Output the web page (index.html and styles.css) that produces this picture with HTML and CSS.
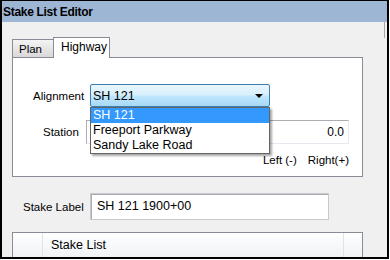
FILE: index.html
```html
<!DOCTYPE html>
<html>
<head>
<meta charset="utf-8">
<link rel="stylesheet" href="styles.css">
</head>
<body>
<div class="window">
  <div class="titlebar">Stake List Editor</div>
  <div class="content">
    <div class="tabs">
      <div class="tab">Plan</div>
      <div class="tab active">Highway</div>
    </div>
    <div class="panel">
      <div class="row row-align">
        <span class="label lbl-align">Alignment</span>
        <div class="combo">
          <span class="combo-text">SH 121</span>
          <span class="arrow"></span>
          <ul class="dropdown">
            <li class="selected">SH 121</li>
            <li>Freeport Parkway</li>
            <li>Sandy Lake Road</li>
          </ul>
        </div>
      </div>
      <div class="row row-station">
        <span class="label lbl-station">Station</span>
        <div class="field station-field">0.0</div>
      </div>
      <div class="row row-offset">
        <span>Left (-)</span>
        <span>Right(+)</span>
      </div>
    </div>
    <div class="row row-label">
      <span class="label lbl-stake">Stake Label</span>
      <div class="field label-field">SH 121 1900+00</div>
    </div>
    <div class="grid">
      <div class="gcell g1"></div>
      <div class="gcell g2">Stake List</div>
      <div class="gcell g3"></div>
    </div>
  </div>
</div>
</body>
</html>
```

FILE: styles.css
```css
* { box-sizing: border-box; }
html, body { margin: 0; padding: 0; background: #ffffff; }
body {
  font-family: "Liberation Sans", Arial, sans-serif;
  font-size: 11.5px;
  color: #000;
}
.window {
  width: 389px;
  height: 259px;
  border-top: 1px solid #000;
  border-left: 2px solid #000;
  border-right: 2px solid #000;
  border-bottom: 2px solid #000;
  background: #f0f0f0;
  overflow: hidden;
  display: flex;
  flex-direction: column;
}
.titlebar {
  height: 21px;
  line-height: 23px;
  background: #9db6d4;
  font-weight: bold;
  font-size: 12px;
  letter-spacing: -0.3px;
  padding-left: 1px;
  flex: none;
}
.content {
  position: relative;
  flex: 1;
  padding: 15px 0 0 10px;
}
.content::after {
  content: "";
  position: absolute;
  right: 2px;
  top: 0;
  width: 1px;
  height: 16px;
  background: #a7a7a7;
}
.tabs {
  display: flex;
  align-items: flex-end;
  height: 20px;
}
.tab {
  width: 42px;
  height: 18px;
  border: 1px solid #898c95;
  border-bottom: none;
  background: linear-gradient(#f4f4f4, #e6e6e6 50%, #d8d8d8);
  padding-left: 6px;
  line-height: 19px;
}
.tab.active {
  position: relative;
  z-index: 2;
  width: 57px;
  height: 21px;
  margin-left: -1px;
  margin-bottom: -1px;
  background: #fff;
  padding-left: 7px;
  line-height: 18px;
  font-size: 12px;
}
.panel {
  width: 351px;
  height: 120px;
  border: 1px solid #898c95;
  background: #fff;
  padding: 26px 13px 9px 0;
  display: flex;
  flex-direction: column;
}
.row {
  display: flex;
  align-items: center;
}
.label { flex: none; }
.lbl-align { margin-left: 20px; width: 57px; }
.lbl-station { margin-left: 30px; width: 45px; }
.combo {
  position: relative;
  width: 180px;
  height: 23px;
  border: 1px solid #3c7fb1;
  border-radius: 2px;
  background: linear-gradient(#eaf6fd, #d9f0fc 45%, #bee6fd 55%, #a7d9f5);
  display: flex;
  align-items: center;
  padding-left: 2px;
  font-size: 12.5px;
}
.combo-text { flex: 1; padding-top: 1px; }
.arrow {
  width: 0;
  height: 0;
  border-left: 4px solid transparent;
  border-right: 4px solid transparent;
  border-top: 4px solid #000;
  margin-right: 6px;
}
.dropdown {
  position: absolute;
  z-index: 5;
  top: 22px;
  left: -1px;
  width: 180px;
  height: 47px;
  margin: 0;
  padding: 0;
  list-style: none;
  background: #fff;
  border: 1px solid #646464;
  box-shadow: 2px 2px 2px rgba(0, 0, 0, 0.35);
}
.dropdown li {
  height: 15px;
  line-height: 15px;
  padding-left: 2px;
  font-size: 12.5px;
}
.dropdown li.selected {
  background: #3399ff;
  color: #fff;
}
.row-station { margin-top: 13px; }
.field {
  border: 1px solid #abadb3;
  border-right-color: #e3e9ef;
  border-bottom-color: #e3e9ef;
  background: #fff;
}
.station-field {
  margin-left: -2px;
  width: 266px;
  height: 24px;
  line-height: 22px;
  text-align: right;
  padding-right: 4px;
  font-size: 12px;
}
.row-offset {
  margin-top: 9px;
  height: 14px;
  justify-content: flex-end;
  gap: 11px;
}
.row-label {
  margin-top: 16px;
}
.lbl-stake { margin-left: 11px; width: 67px; }
.label-field {
  width: 239px;
  height: 27px;
  line-height: 25px;
  padding-left: 6px;
  font-size: 12.5px;
  border-color: #c8c9cc;
  box-shadow: inset 1px 1px 0 #abadb3;
}
.grid {
  margin-top: 12px;
  width: 351px;
  height: 30px;
  border: 1px solid #898c95;
  border-bottom: none;
  display: flex;
  background: #fff;
}
.gcell {
  height: 25px;
  background: linear-gradient(#ffffff, #f7f8fa 50%, #f1f2f4);
  line-height: 25px;
  font-size: 12.5px;
}
.g1 { width: 30px; border-right: 1px solid #e0e2e5; }
.g2 { flex: 1; padding-left: 8px; border-right: 1px solid #e0e2e5; }
.g3 { width: 18px; }
```
